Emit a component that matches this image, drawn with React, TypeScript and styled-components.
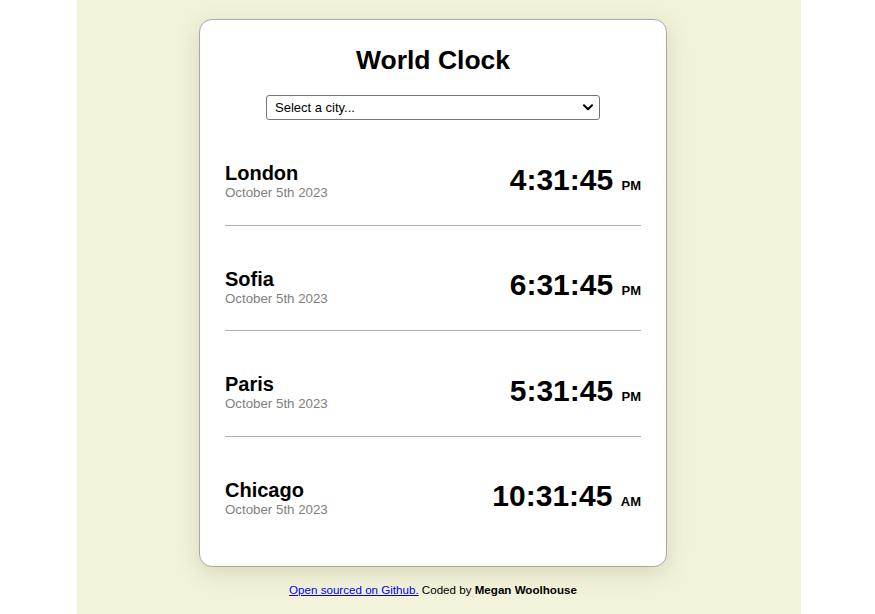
import React from "react";
import styled, { createGlobalStyle } from "styled-components";

const GlobalStyle = createGlobalStyle`
  html, body {
    margin: 0;
    padding: 0;
    background: #ffffff;
    font-family: "Liberation Sans", Arial, sans-serif;
  }
`;

const Page = styled.div`
  width: 724px;
  min-height: 614px;
  margin-left: 77px;
  background: #f3f3db;
  padding-top: 19px;
  box-sizing: border-box;
`;

const Column = styled.div`
  width: 468px;
  margin-left: 122px;
  display: flex;
  flex-direction: column;
`;

const Card = styled.main`
  background: #ffffff;
  border: 1px solid #a8a8a8;
  border-radius: 13px;
  box-shadow: 0 6px 22px rgba(90, 90, 50, 0.18);
  padding: 24px 25px 25px;
  display: flex;
  flex-direction: column;
`;

const Title = styled.h1`
  margin: 0;
  font-size: 26.5px;
  line-height: 32px;
  font-weight: 700;
  text-align: center;
  color: #000;
`;

const SelectWrap = styled.div`
  position: relative;
  width: 334px;
  height: 25px;
  margin: 19px auto 0;
`;

const CitySelect = styled.select`
  display: block;
  width: 100%;
  height: 100%;
  appearance: none;
  -webkit-appearance: none;
  font-family: "Liberation Sans", Arial, sans-serif;
  font-size: 13px;
  color: #000;
  background: #fff;
  border: 1px solid #767676;
  border-radius: 3px;
  padding: 0 8px;
  outline: none;
`;

const Chevron = styled.svg`
  position: absolute;
  right: 7px;
  top: 9px;
  width: 10px;
  height: 7px;
  pointer-events: none;
`;

const Row = styled.div<{ $last?: boolean }>`
  display: flex;
  justify-content: space-between;
  align-items: center;
  padding: 42px 0 24px;
  border-bottom: ${(p) => (p.$last ? "none" : "1px solid #b0b0b0")};
`;

const CityInfo = styled.div`
  display: flex;
  flex-direction: column;
`;

const CityName = styled.div`
  font-size: 20px;
  line-height: 23px;
  font-weight: 700;
  color: #000;
`;

const CityDate = styled.div`
  font-size: 13.3px;
  line-height: 15.5px;
  color: #808080;
`;

const Time = styled.div`
  font-size: 30px;
  line-height: 32px;
  font-weight: 700;
  color: #000;
  padding-bottom: 3px;
`;

const Meridiem = styled.span`
  font-size: 13px;
  line-height: 1;
  font-weight: 700;
`;

const Footer = styled.footer`
  margin-top: 16px;
  text-align: center;
  font-size: 11.6px;
  line-height: 14px;
  color: #000;

  a {
    color: #0000ee;
    text-decoration: underline;
  }
`;

const cities = [
  { name: "London", time: "4:31:45", ampm: "PM" },
  { name: "Sofia", time: "6:31:45", ampm: "PM" },
  { name: "Paris", time: "5:31:45", ampm: "PM" },
  { name: "Chicago", time: "10:31:45", ampm: "AM" },
];

export default function App() {
  return (
    <>
      <GlobalStyle />
      <Page>
        <Column>
          <Card>
            <Title>World Clock</Title>
            <SelectWrap>
              <CitySelect defaultValue="">
                <option value="">Select a city...</option>
                <option value="current">My current location</option>
                <option value="Europe/London">London</option>
                <option value="Europe/Sofia">Sofia</option>
                <option value="Europe/Paris">Paris</option>
                <option value="America/Chicago">Chicago</option>
              </CitySelect>
              <Chevron viewBox="0 0 10 7" aria-hidden="true">
                <path d="M1 1.2 L5 5.2 L9 1.2" fill="none" stroke="#000" strokeWidth="2" strokeLinecap="round" strokeLinejoin="round" />
              </Chevron>
            </SelectWrap>
            {cities.map((c, i) => (
              <Row key={c.name} $last={i === cities.length - 1}>
                <CityInfo>
                  <CityName>{c.name}</CityName>
                  <CityDate>October 5th 2023</CityDate>
                </CityInfo>
                <Time>
                  {c.time} <Meridiem>{c.ampm}</Meridiem>
                </Time>
              </Row>
            ))}
          </Card>
          <Footer>
            <a href="#">Open sourced on Github.</a> Coded by <strong>Megan Woolhouse</strong>
          </Footer>
        </Column>
      </Page>
    </>
  );
}
